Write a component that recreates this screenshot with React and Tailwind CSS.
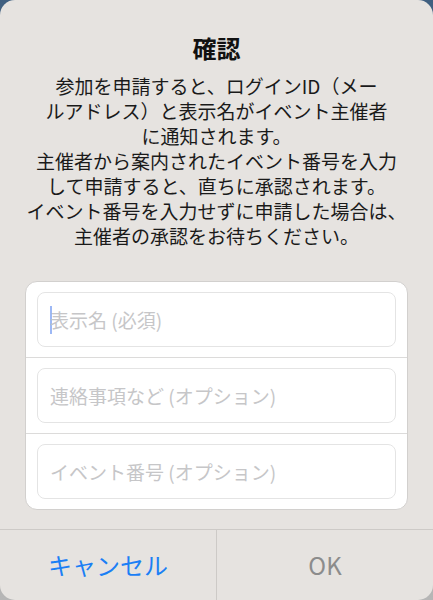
const lines = [
  "参加を申請すると、ログインID（メー",
  "ルアドレス）と表示名がイベント主催者",
  "に通知されます。",
  "主催者から案内されたイベント番号を入力",
  "して申請すると、直ちに承認されます。",
  "イベント番号を入力せずに申請した場合は、",
  "主催者の承認をお待ちください。",
];

const fields = [
  { placeholder: "表示名 (必須)", focused: true },
  { placeholder: "連絡事項など (オプション)" },
  { placeholder: "イベント番号 (オプション)" },
];

function Field({ placeholder, focused }) {
  return (
    <div className="px-[11px] py-[10px]">
      <div className="flex h-[55px] items-center rounded-[8px] border border-[#e4e4e4] bg-white pl-[12px]">
        {focused && <span className="mr-[-2px] h-[28px] w-[2px] shrink-0 bg-[#9db8f5]" />}
        <span className="whitespace-nowrap text-[19px] leading-none text-[#c6c6c8]">{placeholder}</span>
      </div>
    </div>
  );
}

export default function App() {
  return (
    <div
      className="h-[600px] w-[433px] bg-gradient-to-b from-[#3f5f80] via-[#9a9a9a] to-[#b6b6b6]"
      style={{ fontFamily: '"Noto Sans CJK JP", "Noto Sans", sans-serif' }}
    >
      <div className="flex h-[600px] w-[433px] flex-col overflow-hidden rounded-[15px] bg-[#e6e3e0]">
        <h1 className="pt-[33px] text-center text-[24px] font-bold leading-[30px] text-[#111]">確認</h1>
        <div className="mt-[10px] text-center text-[19px] leading-[25px] text-[#1a1a1a]">
          {lines.map((line) => (
            <div key={line} className="whitespace-nowrap">
              {line}
            </div>
          ))}
        </div>

        <div className="mx-[25px] mt-[33px] overflow-hidden rounded-[12px] border border-[#d2d0ce] bg-white">
          {fields.map((f, i) => (
            <div key={f.placeholder} className={i > 0 ? "border-t border-[#dcdbda]" : ""}>
              <Field {...f} />
            </div>
          ))}
        </div>

        <div className="mt-auto flex h-[71px] border-t border-[#cdcac7]">
          <button
            type="button"
            className="flex flex-1 items-center justify-center border-r border-[#cdcac7] text-[24px] text-[#1b7ff5]"
          >
            キャンセル
          </button>
          <button type="button" className="flex flex-1 items-center justify-center text-[24px] text-[#8c8c8c]">
            OK
          </button>
        </div>
      </div>
    </div>
  );
}
